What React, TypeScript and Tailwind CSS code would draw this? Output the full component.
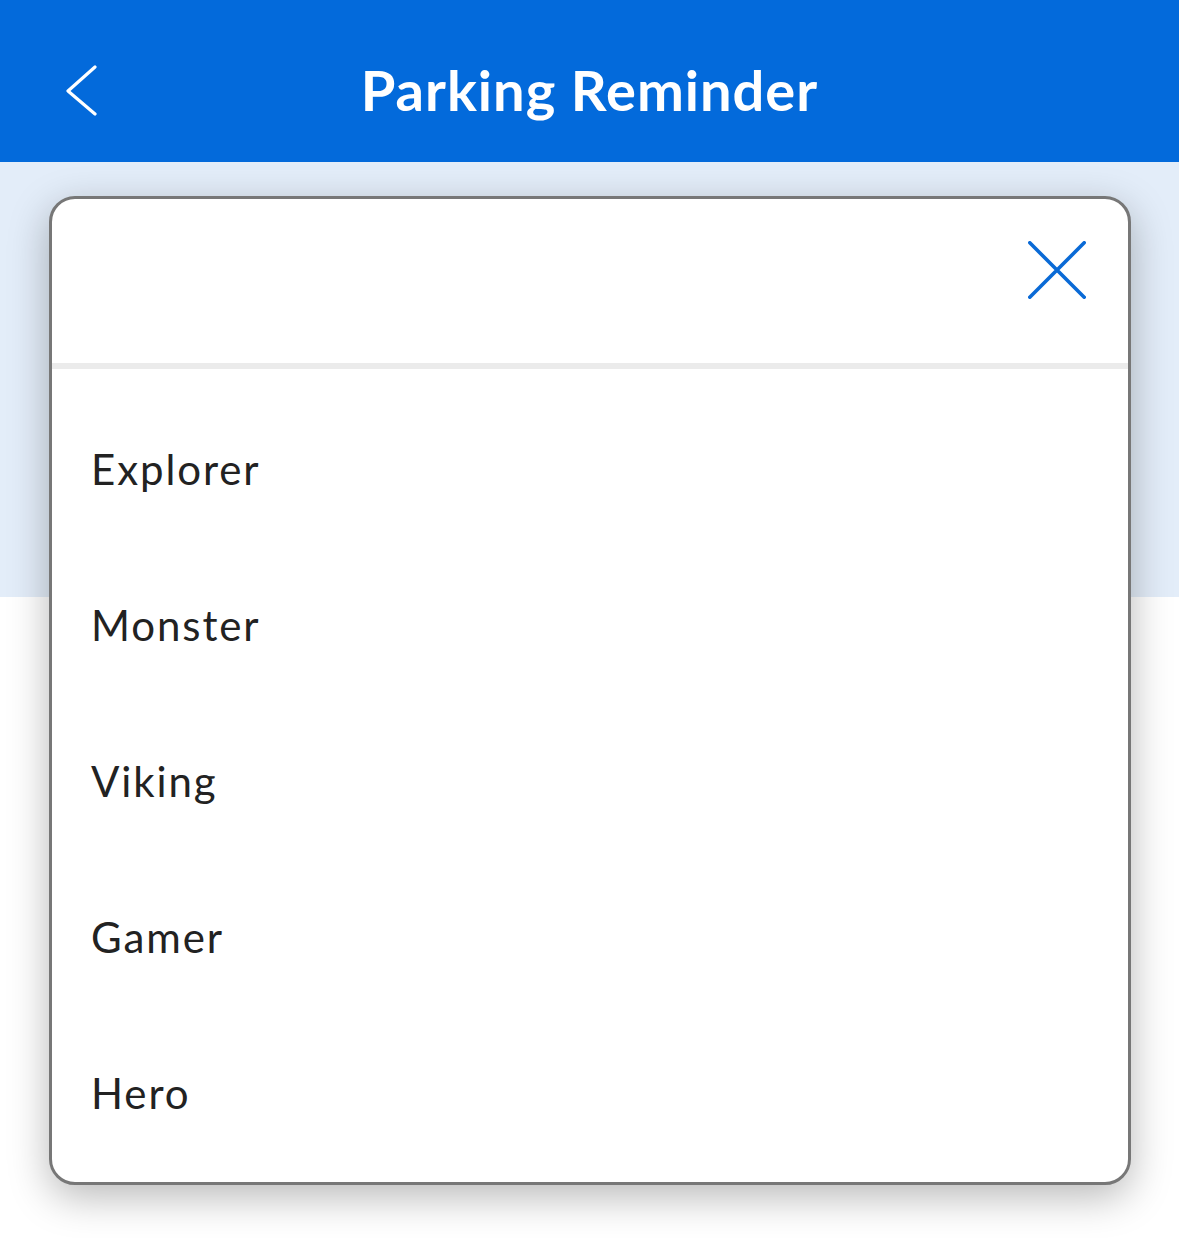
import React from "react";

const options = ["Explorer", "Monster", "Viking", "Gamer", "Hero"];

const App = () => {
    return (
        <div
            className="relative w-[1179px] h-[1238px] bg-white overflow-hidden"
            style={{ fontFamily: "Lato, 'Noto Sans', sans-serif" }}
        >
            {/* Top bar */}
            <div className="relative h-[162px] bg-[#036ADB] flex items-center justify-center">
                <button className="absolute left-[64px] top-[64px] w-[36px] h-[52px]">
                    <svg width="36" height="52" viewBox="0 0 36 52" fill="none">
                        <path d="M31 3 L4 27 L31 50" stroke="white" strokeWidth="3.2" strokeLinecap="round" strokeLinejoin="round" />
                    </svg>
                </button>
                <h1 className="text-white font-bold text-[56px] leading-none tracking-[1px] pt-[18px]">
                    Parking Reminder
                </h1>
            </div>

            {/* Page background band */}
            <div className="h-[435px] bg-[#E3EDF9]" />

            {/* Modal */}
            <div className="absolute left-[49px] top-[196px] w-[1082px] h-[989px] bg-white border-[3px] border-[#777777] rounded-[26px] shadow-[0_12px_40px_rgba(0,0,0,0.28)] overflow-hidden flex flex-col">
                <div className="h-[164px] shrink-0 flex justify-end items-start">
                    <button className="mt-[42px] mr-[42px] w-[58px] h-[58px] flex items-center justify-center">
                        <svg width="58" height="58" viewBox="0 0 58 58" fill="none">
                            <path d="M1.8 1.8 L56.2 56.2 M56.2 1.8 L1.8 56.2" stroke="#0A6AD6" strokeWidth="3.6" strokeLinecap="round" />
                        </svg>
                    </button>
                </div>
                <div className="h-[6px] shrink-0 bg-[#EBEBEB]" />
                <ul className="pt-[22px] flex flex-col">
                    {options.map((opt) => (
                        <li
                            key={opt}
                            className="h-[156px] flex items-center pl-[39px] text-[42px] text-[#222222] tracking-[1.9px]"
                        >
                            {opt}
                        </li>
                    ))}
                </ul>
            </div>
        </div>
    );
};

export default App;
